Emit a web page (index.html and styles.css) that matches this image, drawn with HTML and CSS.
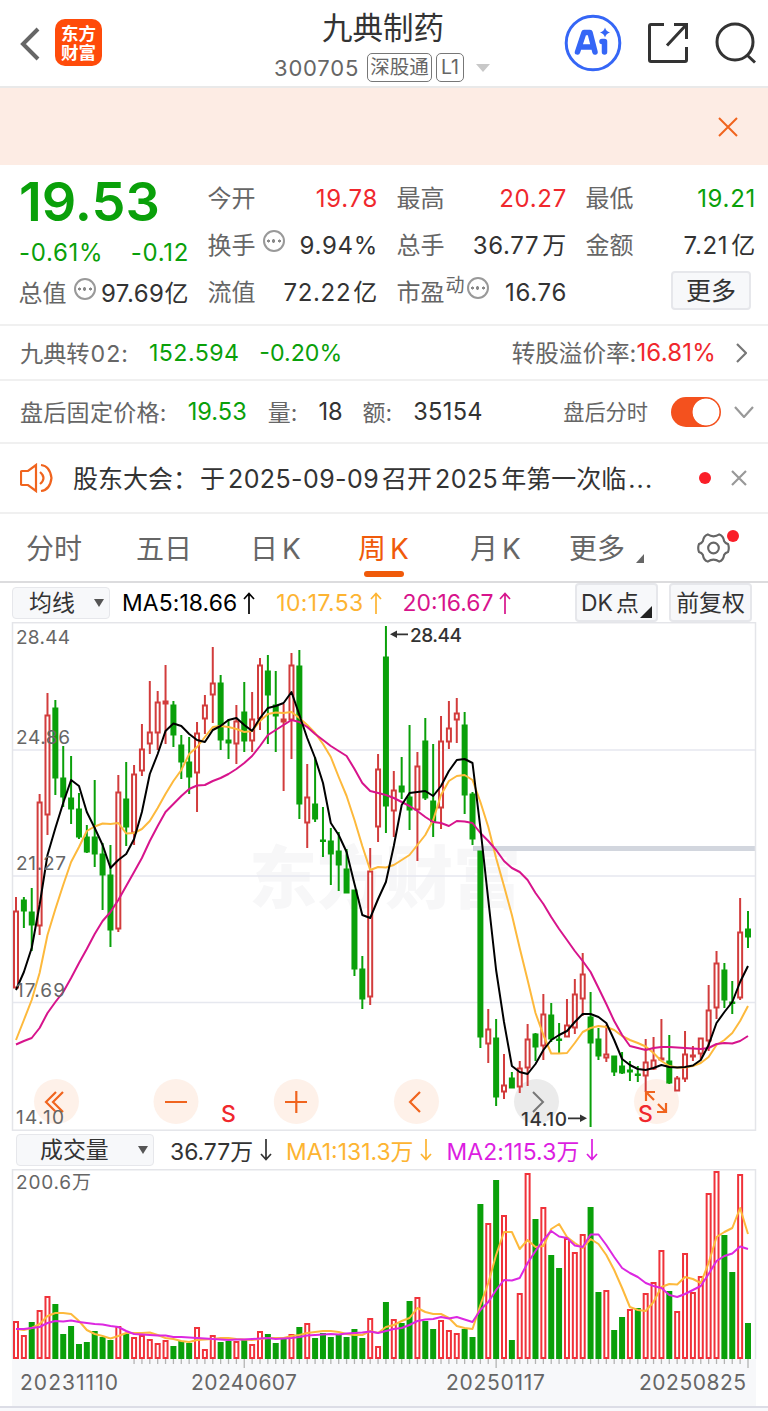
FILE: index.html
```html
<!DOCTYPE html>
<html lang="zh-CN">
<head>
  <meta charset="UTF-8" />
  <meta name="viewport" content="width=device-width, initial-scale=1.0"/>
  <title>九典制药 300705</title>
  <link rel="stylesheet" href="styles.css">
</head>

<body>
  <div class="header">
    <div class="header-left">
      <svg class="back" width="22" height="36" viewBox="0 0 22 36"><path d="M19 3 L4 18 L19 33"/></svg>
      <div class="logo"><span>东方</span><span>财富</span></div>
    </div>
    <div class="header-title">
      <h1>九典制药</h1>
      <div class="code">
        <span class="num">300705</span>
        <span class="tag">深股通</span>
        <span class="tag tag-l1">L1</span>
        <i class="caret"></i>
      </div>
    </div>
    <div class="header-right">
      <svg width="58" height="58" viewBox="0 0 58 58">
        <circle cx="29" cy="29" r="26.8" fill="none" stroke="#3566f6" stroke-width="3"/>
        <path d="M13.500 38 L20 18.500 H26 L31 38 M17 33 H29" fill="none" stroke="#3566f6" stroke-width="5.500" stroke-linejoin="round" stroke-linecap="round"/>
        <path d="M38 27.500 H40.500 V38" fill="none" stroke="#3566f6" stroke-width="5.500" stroke-linejoin="round" stroke-linecap="round"/>
        <path d="M41 13.500 Q42 17.500 46 18.500 Q42 19.500 41 23.500 Q40 19.500 36 18.500 Q40 17.500 41 13.500Z" fill="#3566f6"/>
      </svg>
      <svg class="share" width="42" height="42" viewBox="0 0 42 42"><path d="M17 2.500 H4 Q2.500 2.500 2.500 4 V38 Q2.500 39.500 4 39.500 H38 Q39.500 39.500 39.500 38 V25 M27 2.500 H39.500 V17 M39.500 2.500 L20 23.500"/></svg>
      <svg class="search" width="42" height="42" viewBox="0 0 42 42"><circle cx="20" cy="20" r="18"/><path d="M32 33 L40 40.500"/></svg>
    </div>
  </div>

  <div class="banner">
    <svg width="20" height="20" viewBox="0 0 20 20"><path d="M1 1 L19 19 M19 1 L1 19"/></svg>
  </div>

  <div class="quote">
    <div class="col">
      <div class="price">19.53</div>
      <div class="cell change green"><span>-0.61%</span><span>-0.12</span></div>
      <div class="cell"><label>总值</label><i class="more-dot"></i><span class="tight">97.69亿</span></div>
    </div>
    <div class="col">
      <div class="cell"><label>今开</label><span class="red">19.78</span></div>
      <div class="cell"><label>换手</label><i class="more-dot"></i><span>9.94%</span></div>
      <div class="cell"><label>流值</label><span>72.22<b class="unit">亿</b></span></div>
    </div>
    <div class="col">
      <div class="cell"><label>最高</label><span class="red">20.27</span></div>
      <div class="cell"><label>总手</label><span>36.77<b class="unit wide">万</b></span></div>
      <div class="cell"><label>市盈</label><sup>动</sup><i class="more-dot near"></i><span>16.76</span></div>
    </div>
    <div class="col">
      <div class="cell"><label>最低</label><span class="green">19.21</span></div>
      <div class="cell"><label>金额</label><span>7.21<b class="unit wide">亿</b></span></div>
      <div class="cell"><button class="more-btn">更多</button></div>
    </div>
  </div>

  <div class="row bond">
    <label>九典转<em>02:</em></label>
    <span class="green v1">152.594</span>
    <span class="green v2">-0.20%</span>
    <div class="right">
      <label>转股溢价率:</label><span class="red rate">16.81%</span>
      <svg class="arrow" width="12" height="20" viewBox="0 0 12 20"><path d="M2 1 L11 10 L2 19"/></svg>
    </div>
  </div>

  <div class="row after">
    <label class="a0">盘后固定价格:</label>
    <span class="green a1">19.53</span>
    <label class="a2">量:</label>
    <span class="a3">18</span>
    <label class="a4">额:</label>
    <span class="a5">35154</span>
    <div class="right">
      <label>盘后分时</label>
      <i class="switch"></i>
      <svg class="arrow grey" width="20" height="12" viewBox="0 0 20 12"><path d="M1 1 L10 11 L19 1"/></svg>
    </div>
  </div>

  <div class="row notice">
    <svg width="34" height="30" viewBox="0 0 34 30"><path d="M2 8 H8 L16 2 V28 L8 22 H2 Q1 22 1 21 V9 Q1 8 2 8 M20 9 Q27 15 20 21 M21 2 Q30 3 31.500 15 Q30 27 21 28"/></svg>
    <p>股东大会：<span>于<em>2025-09-09</em>召开<em>2025</em>年第一次临<b>...</b></span></p>
    <i class="dot"></i>
    <svg class="close" width="16" height="16" viewBox="0 0 16 16"><path d="M1 1 L15 15 M15 1 L1 15"/></svg>
  </div>

  <div class="tabs">
    <a>分时</a>
    <a class="t2">五日</a>
    <a class="t3">日<em>K</em></a>
    <a class="t4 active">周<em>K</em></a>
    <a class="t5">月<em>K</em></a>
    <a class="tab-more">更多<i></i></a>
    <div class="gear">
      <svg width="33" height="32" viewBox="0 0 34 32"><path d="M11 2 Q17 6 23 2 Q27 3 28 9 Q29 11 32 12 Q33.500 16 32 20 Q29 21 28 23 Q27 29 23 30 Q17 26 11 30 Q7 29 6 23 Q5 21 2 20 Q.5 16 2 12 Q5 11 6 9 Q7 3 11 2Z"/><circle cx="17" cy="16" r="5.500"/></svg>
      <i class="dot"></i>
    </div>
  </div>

  <div class="toolbar">
    <button class="select">均线<i></i></button>
    <span class="m5">MA5:18.66</span>
    <svg class="trend m5" width="12" height="22" viewBox="0 0 12 22"><path d="M6 22V1.500M1 7L6 1.500L11 7"/></svg>
    <span class="m10 spaced">10:17.53</span>
    <svg class="trend m10" width="12" height="22" viewBox="0 0 12 22"><path d="M6 22V1.500M1 7L6 1.500L11 7"/></svg>
    <span class="m20">20:16.67</span>
    <svg class="trend m20" width="12" height="22" viewBox="0 0 12 22"><path d="M6 22V1.500M1 7L6 1.500L11 7"/></svg>
    <button class="dk">DK<em>点</em><i></i></button>
    <button class="fq">前复权</button>
  </div>

  <svg class="chart" id="kline" width="768" height="509" viewBox="0 622 768 509"></svg>

  <div class="toolbar vol-bar">
    <button class="select wide">成交量<i></i></button>
    <span class="vol">36.77万</span>
    <svg class="trend" width="12" height="22" viewBox="0 0 12 22"><path d="M6 0V20.500M1 15L6 20.500L11 15"/></svg>
    <span class="m10">MA1:131.3万</span>
    <svg class="trend m10" width="12" height="22" viewBox="0 0 12 22"><path d="M6 0V20.500M1 15L6 20.500L11 15"/></svg>
    <span class="mv">MA2:115.3万</span>
    <svg class="trend mv" width="12" height="22" viewBox="0 0 12 22"><path d="M6 0V20.500M1 15L6 20.500L11 15"/></svg>
  </div>

  <svg class="chart" id="volume" width="768" height="190" viewBox="0 1169 768 190"></svg>
  <svg class="chart axis" id="axis" width="768" height="47" viewBox="0 1359 768 47"></svg>
  <div class="bottom"></div>

  <script src="script.js"></script>
</body>
</html>
```

FILE: styles.css
```css
html, body {
  margin: 0;
  height: 100%;
}

body {
  width: 768px;
  overflow: hidden;
  background-color: #fff;
  color: #333;
  font-family: Inter, "Noto Sans CJK SC", sans-serif;
  font-size: 24px;
}

* {
  box-sizing: border-box;
}

svg {
  display: block;
  flex: none;
}

i, em, b {
  font-style: normal;
  font-weight: normal;
}

label {
  color: #666;
}

button {
  font: inherit;
  color: #333;
  padding: 0;
  background-color: #f7f8fa;
  border: 2px solid #e6e7eb;
  border-radius: 4px;
  white-space: nowrap;
}

.green { color: #0aa00a; }
.red { color: #f0282d; }

/* header */
.header {
  height: 88px;
  display: flex;
  justify-content: space-between;
  border-bottom: 2px solid #e9e9e9;
}

.header-left {
  width: 260px;
  padding: 19px 0 0 19px;
  display: flex;
}

.back {
  margin-top: 7px;
  fill: none;
  stroke: #666;
  stroke-width: 4;
}

.logo {
  width: 47px;
  height: 47px;
  margin-left: 14px;
  border-radius: 10px;
  background-color: #ff4b0a;
  color: #fff;
  display: flex;
  flex-direction: column;
  align-items: center;
  justify-content: center;
  font-size: 17.5px;
  font-weight: bold;
  line-height: 19px;
}

.header-title {
  width: 250px;
  display: flex;
  flex-direction: column;
  align-items: center;
}

.header-title h1 {
  margin: 7px 0 0 -4px;
  font-size: 30.5px;
  font-weight: normal;
  line-height: 41px;
}

.code {
  display: flex;
  align-items: center;
  width: 222px;
  height: 41px;
  margin-top: 1px;
  color: #666;
}

.num {
  flex: none;
  font-size: 22px;
  width: 86px;
  letter-spacing: .8px;
}

.tag {
  flex: none;
  height: 29px;
  width: 65px;
  margin-left: 7px;
  border: 1.5px solid #777;
  border-radius: 5px;
  font-size: 19.5px;
  line-height: 26px;
  text-align: center;
  white-space: nowrap;
}

.tag-l1 {
  width: 28px;
  margin-left: 4px;
}

.caret {
  margin-left: 12px;
  border: 7px solid transparent;
  border-top: 8px solid #c8c8c8;
  border-bottom: 0;
}

.header-right {
  width: 258px;
  display: flex;
  padding: 14px 11px 0 0;
  justify-content: flex-end;
  gap: 25px;
}

.share, .search {
  margin-top: 8px;
  fill: none;
  stroke: #333;
  stroke-width: 3;
}

.header-right .share {
  margin-right: 1px;
}

.banner {
  height: 77px;
  background-color: #fdece4;
  display: flex;
  align-items: center;
  justify-content: flex-end;
  padding-right: 30px;
}

.banner svg {
  stroke: #f0641e;
  stroke-width: 2;
}

/* quote block */
.quote {
  height: 161px;
  border-bottom: 2px solid #f0f0f0;
  padding: 10px 13px 0 19px;
  display: grid;
  grid-template-columns: repeat(4, 169px);
  gap: 20px;
}

.cell {
  height: 47px;
  display: flex;
  align-items: center;
  line-height: 48px;
  white-space: nowrap;
}

.cell label {
  margin-left: -.5px;
}

.cell > span {
  letter-spacing: .7px;
}

.cell > span:last-child,
.cell > button {
  margin-left: auto;
  margin-right: -1px;
}

.price {
  height: 54px;
  line-height: 54px;
  font-size: 54px;
  font-weight: 600;
  color: #0aa00a;
}

.change {
  height: 46px;
  padding-top: 1px;
}

.col:first-child .cell:last-child {
  height: 37px;
  line-height: 37px;
}

.cell > .tight {
  letter-spacing: .5px;
}

.unit {
  margin-left: 2px;
}

.unit.wide {
  margin-left: 3px;
}

.more-dot {
  flex: none;
  width: 22px;
  height: 22px;
  margin: -10px 0 0 7px;
  border: 2px solid #999;
  border-radius: 50%;
  background: radial-gradient(circle, #888 1.5px, transparent 2px) center / 5px 20px no-repeat,
    radial-gradient(circle, #888 1.3px, transparent 1.8px) 1px center / 5px 20px no-repeat,
    radial-gradient(circle, #888 1.3px, transparent 1.8px) 12px center / 5px 20px no-repeat;
}

.more-dot.near {
  margin-left: 2px;
}

.cell sup {
  font-size: 19px;
  line-height: 20px;
  margin: -13px 0 0 1px;
  color: #666;
}

.cell > .more-btn {
  width: 80px;
  height: 39px;
  margin: -4px 4px 0 auto;
  font-size: 25px;
  line-height: 34px;
}

/* info rows */
.row {
  display: flex;
  align-items: center;
  padding: 0 13px 0 20px;
  border-bottom: 2px solid #f0f0f0;
  white-space: nowrap;
}

.row label {
  margin-top: -2px;
}

.right {
  margin-left: auto;
  display: flex;
  align-items: center;
}

.bond {
  height: 55px;
  font-size: 23.2px;
}

.bond em {
  letter-spacing: 1px;
  margin-left: 1px;
}

.bond .v1 {
  margin-left: 20px;
  letter-spacing: .4px;
}

.bond .v2 { margin-left: 20px; }

.bond .right label { font-size: 23.6px; }

.rate {
  font-size: 24px;
  letter-spacing: .2px;
}

.arrow {
  margin: 0 8px 0 19px;
  fill: none;
  stroke: #777;
  stroke-width: 2.2;
}

.after {
  height: 63px;
  font-size: 23.6px;
}

.after label { font-size: 23px; }
.after .a0 { letter-spacing: .3px; }
.after .a1 { margin-left: 21px; }
.after .a2 { margin-left: 21px; }
.after .a3 { margin-left: 21px; }
.after .a4 { margin-left: 20px; }
.after .a5 { margin-left: 21px; letter-spacing: .3px; }
.after .right label { font-size: 21.2px; }

.switch {
  width: 50px;
  height: 30px;
  margin-left: 23px;
  border-radius: 15px;
  background: radial-gradient(circle at 35px 15px, #fff 13px, transparent 13.8px) #f4511e;
}

.arrow.grey {
  margin: 0 1px 0 13px;
  stroke: #999;
}

.notice {
  height: 70px;
  font-size: 25px;
}

.notice svg {
  fill: none;
  stroke: #f0641e;
  stroke-width: 2.2;
}

.notice p {
  margin: -3px 0 0 19px;
  width: 606px;
}

.notice p span {
  margin-left: 2px;
}

.notice p b {
  margin-left: 2px;
  letter-spacing: 1.2px;
}

.notice em {
  letter-spacing: .4px;
  margin: 0 3px;
}

.dot {
  width: 12px;
  height: 12px;
  border-radius: 50%;
  background-color: #fa1e28;
}

.notice .dot {
  margin-left: 20px;
}

.notice .close {
  margin-left: 20px;
  stroke: #999;
}

/* tabs */
.tabs {
  height: 69px;
  border-bottom: 2px solid #dcdcde;
  display: flex;
  align-items: center;
  padding-left: 26px;
  color: #666;
  font-size: 28px;
}

.tabs a {
  flex: none;
  width: 110px;
  height: 67px;
  line-height: 70px;
  white-space: nowrap;
  position: relative;
}

.tabs .t2 { width: 114px; }
.tabs .t3 { width: 108px; }
.tabs .t4 { width: 112px; }
.tabs .t5 { width: 99px; }
.tabs .tab-more { width: 128px; }

.tabs em {
  margin-left: 4px;
}

.tabs .active {
  color: #f05a0a;
}

.tabs .active::after {
  content: "";
  position: absolute;
  left: 6px;
  bottom: 4px;
  width: 40px;
  height: 6px;
  border-radius: 3px;
  background-color: #f05a0a;
}

.tab-more i {
  position: absolute;
  left: 67px;
  top: 40px;
  border-left: 8px solid transparent;
  border-bottom: 9px solid #666;
}

.gear {
  position: relative;
}

.gear svg {
  fill: none;
  stroke: #666;
  stroke-width: 2.2;
}

.gear .dot {
  position: absolute;
  right: -9px;
  top: -2px;
}

/* chart toolbars */
.toolbar {
  height: 39px;
  display: flex;
  align-items: center;
  padding-left: 12px;
  font-size: 22.9px;
  white-space: nowrap;
}

.select {
  width: 98px;
  height: 32px;
  margin-right: 12px;
  padding-left: 16px;
  line-height: 30px;
  display: flex;
  align-items: center;
  border-width: 1.5px;
}

.select i {
  margin: 0 5px 0 auto;
  border: 5px solid transparent;
  border-top: 8px solid #555;
  border-bottom: 0;
}

.trend {
  margin: 0 21px 0 6px;
  fill: none;
  stroke: currentColor;
  stroke-width: 1.7;
}

.m5 { color: #000; letter-spacing: .1px; }
.m10 { color: #fdb432; }
.m20 { color: #d7148c; }
.mv { color: #dc1ee1; }

.spaced {
  letter-spacing: .4px;
}

.dk, .fq {
  height: 39px;
  line-height: 36px;
}

.dk {
  width: 83px;
  margin-left: auto;
  text-align: left;
  padding-left: 4px;
  position: relative;
}

.dk em {
  margin-left: 3px;
}

.dk i {
  position: absolute;
  right: 4px;
  bottom: 2px;
  border-left: 12px solid transparent;
  border-bottom: 12px solid #222;
}

.fq {
  width: 83px;
  margin: 0 16px 0 11px;
}

.vol-bar {
  height: 38px;
  padding-left: 16px;
}

.vol-bar span {
  margin-top: -1px;
}

.vol-bar .trend {
  margin: 0 14px 0 7px;
}

.select.wide {
  width: 138px;
  padding-left: 23px;
  margin-right: 16px;
}

.vol-bar .mv {
  letter-spacing: .1px;
}

/* charts */
.chart text {
  font-size: 19px;
  fill: #666;
}

.chart .mark {
  fill: #333;
  font-weight: 500;
}

.chart .signal {
  font-size: 23px;
  font-weight: 500;
  fill: #f0282d;
}

.chart .watermark {
  font-family: "Noto Sans CJK SC", sans-serif;
  font-size: 68px;
  font-weight: 900;
  fill: #f7f7f8;
}

.frame { fill: none; stroke: #e4e5e9; stroke-width: 1.5; }
.grid { stroke: #e6e8ef; stroke-width: 1.5; }
.level { stroke: #d2d6de; stroke-width: 5; }
.candle-up { fill: #fff; stroke: #d23c3c; stroke-width: 2; }
.candle-down { fill: #0aa00a; stroke: #0aa00a; stroke-width: 2; }
.bar-up { fill: #fff; stroke: #f0323a; stroke-width: 2; }
.bar-down { fill: #0aa00a; stroke: #0aa00a; stroke-width: 2; }
.line { fill: none; stroke-width: 2; stroke-linejoin: round; }
.line-ma5 { stroke: #000; }
.line-ma10 { stroke: #fdb93c; }
.line-ma20 { stroke: #d7148c; }
.line-mv { stroke: #dc28e1; }
.ctl { fill: #fef1e9; }
.ctl-off { fill: #ebebeb; }
.ctl-icon { fill: none; stroke: #f0641e; stroke-width: 2.2; }
.ctl-icon-off { fill: none; stroke: #777; stroke-width: 2; }
.arrow-line { fill: none; stroke: #333; stroke-width: 1.8; }
.arrow-head { fill: #333; }
.tick { stroke: #b4b4b4; stroke-width: 1.3; }
.axis-bg { fill: #f7f8fa; }

.chart.axis text {
  font-size: 21px;
}

.bottom {
  height: 5px;
  border-top: 2px solid #dcdde6;
  background-color: #f8f9fc;
}
```

FILE: script.js
```js
const STEP = 732 / 93;
const X0 = 16;

// type, body top, body bottom, high, low
const candles = [
  ["u",911,988,897,988],["d",900,911,897,928],["d",912,925,888,951],["u",802,926,794,935],
  ["u",715,815,693,835],["d",708,778,700,795],["d",778,797,746,807],["d",798,809,756,824],
  ["d",809,837,793,839],["d",837,852,825,853],["d",837,854,780,867],["d",854,875,843,910],
  ["d",875,930,845,947],["u",792,929,775,932],["d",799,827,762,846],["u",774,833,765,845],
  ["u",749,771,724,776],["u",732,744,681,754],["u",702,733,691,750],["u",701,704,665,744],
  ["d",705,735,701,747],["d",745,762,735,779],["d",762,777,737,794],["u",733,773,722,812],
  ["u",705,719,695,734],["u",683,695,647,723],["d",683,740,675,750],["d",740,743,719,759],
  ["u",721,744,705,764],["d",712,741,682,752],["u",719,741,692,752],["u",665,719,658,730],
  ["d",671,695,655,744],["d",705,716,671,752],["u",719,722,704,791],["u",665,720,653,759],
  ["d",666,804,650,819],["u",797,823,764,848],["d",804,819,757,822],["d",840,841,807,857],
  ["d",841,854,828,885],["d",851,865,832,891],["d",869,893,849,893],["d",890,969,890,976],
  ["d",969,999,956,1009],["u",871,997,848,1005],["u",769,827,754,842],["d",657,806,626,833],
  ["u",790,811,771,837],["d",786,792,757,799],["d",797,810,725,830],["u",766,810,752,861],
  ["d",741,798,718,800],["d",801,822,744,837],["u",741,808,716,829],["u",728,742,701,749],
  ["u",713,720,698,743],["d",725,795,712,814],["d",794,839,792,845],["d",851,1037,851,1048],
  ["u",1029,1044,1009,1063],["d",1038,1097,1019,1106],["u",1085,1092,1054,1099],["d",1078,1088,1072,1088],
  ["u",1068,1087,1061,1093],["u",1039,1068,1024,1086],["d",1034,1047,1033,1061],["u",1014,1046,994,1060],
  ["d",1015,1039,1003,1042],["d",1039,1040,1023,1053],["u",1025,1037,999,1037],["u",994,1028,979,1034],
  ["u",974,999,953,1016],["d",1017,1043,992,1127],["d",1039,1056,1028,1060],["u",1054,1058,1025,1062],
  ["d",1056,1072,1056,1076],["d",1066,1073,1052,1074],["d",1070,1072,1061,1081],["d",1074,1075,1066,1082],
  ["u",1062,1076,1039,1092],["u",1060,1069,1037,1070],["u",1058,1060,1019,1060],["d",1061,1083,1035,1084],
  ["u",1078,1091,1076,1091],["u",1054,1079,1031,1082],["u",1055,1057,1046,1061],["u",1038,1054,1038,1060],
  ["u",1010,1041,985,1051],["u",963,1008,951,1019],["d",970,1000,963,1008],["d",1002,1003,981,1014],
  ["u",932,998,898,1000],["d",929,937,911,948]
];

const ma5 = [
  990,972,948,905,855,828,803,780,786,812,828,845,868,860,854,839,812,774,754,731,
  723.5,726,734,740,742,730,726,720,718,725,731,718,708,706,703,692,715,738,758,783,
  823,835,852,884,915,918,899,882,846,805,793,792,791,796,786,771,760,759,763,828,
  900,970,1022,1066,1072,1074,1064,1050,1040,1035,1031,1022,1014,1014,1017,1023,1040,1059,1065,1069,
  1070,1068,1065,1067,1067.5,1067,1065.5,1060,1045,1023,1012,1002,982,966
];

const ma10 = [
  1040,1020,1000,973,935,909,885,862,847,831,826.5,823.5,824,823,833.5,833,829,821,808,794,
  781,770,754,747,737,727,726,727,729,732,731,721,714,712.5,713,712,718,725,733,744,
  757,777,796,820,846,870,867,867.5,865,860,855,845,835,820,795,781,776,775,780,802,
  827,858,886,915,948,980,1013,1035,1053.5,1053.5,1053,1043,1032,1028,1026,1027,1030,1036,1040,1043,
  1046.5,1053,1061,1066,1067.5,1067.5,1066,1063,1057,1045,1040,1033,1021,1006
];

const ma20 = [
  1044.5,1041,1038,1028,1013,1002,992,978,963,949,934,921,912,900,886,872,858,841,826,812,
  804,796,789,785.5,785,781,778,774,769,763,756,746,735,730,725,720,722,727,734,740,
  746,751,756,769,783,791,793,795,798,802,806,811,817,822,823,826,821,821.5,823,833,
  841,850,861,868,872,880,893,904,917,929,940,951,961,972,988,1004,1021,1035,1046,1048,
  1050,1048,1047,1047,1047.5,1048,1048.5,1049,1048,1044,1043,1043.5,1041,1036
];

const volumes = (
  "u1321 u1335 d1322 u1310 u1296 d1304 d1334 d1326 d1344 d1342 d1331 d1337 d1340 u1326 d1333 u1337 u1335 u1339 u1343 u1340 " +
  "d1346 d1341 d1343 u1327 u1349 u1335 d1342 d1341 u1341 d1340 u1344 u1331 d1334 d1343 d1339 u1334 d1327 u1323 d1338 d1333 " +
  "d1337 d1334 d1337 d1329 d1338 u1318 u1346 d1302 u1319 d1323 d1301 u1297 d1321 d1329 u1320 u1330 u1333 d1329 d1337 d1204 " +
  "u1223 d1180 u1215 d1340 u1293 u1173 d1219 u1207 d1255 d1268 u1238 u1252 u1234 d1207 d1292 u1290 d1330 d1317 u1309 d1308 " +
  "u1293 u1282 u1250 d1291 u1311 u1253 u1292 u1276 u1193 u1171 d1235 d1272 u1174 d1323"
).split(" ");

const mv1 = [
  1329,1330,1328,1324,1316,1313,1313,1314,1321,1330,1334,1336,1338.5,1336,1333,1333,1333,1332.5,1335,1338,
  1339,1341,1342,1340,1339.5,1339,1338,1338,1339,1339.5,1340,1339,1338,1338,1338,1336,1335,1333,1332,1331,
  1331,1332,1334,1335,1335,1331,1333,1327,1325,1321,1318,1308,1312,1314,1314,1318,1326,1328,1329,1305,
  1283,1255,1232,1232,1249,1240,1247,1246,1229,1224,1237,1243,1248,1239,1244,1255,1270,1288,1307,1310,
  1311,1302,1287,1284,1284.5,1277,1279,1283,1263,1237,1232,1228,1208,1234
];

const mv2 = [
  1329,1329,1328,1327,1323,1321,1321.5,1320.5,1322,1323,1324,1324.5,1326,1327,1331,1334,1334.5,1335,1335.5,1335.5,
  1337,1337,1337.5,1338,1338.5,1339,1339.5,1340,1339.5,1339.5,1339,1338.5,1338,1339,1338.5,1338,1337,1335.5,1335,1334.5,
  1334,1334.5,1333.5,1333,1332.5,1331.5,1333,1331,1329,1328,1325,1321,1319.5,1319,1317,1318.5,1317,1319.5,1322,1310,
  1302,1290,1280,1280.5,1278,1263,1251,1240,1231,1236.5,1238,1245.5,1247,1234.5,1234.5,1245,1257,1268,1273,1277,
  1283,1286,1288,1295,1297,1294,1290,1286,1274,1261,1256,1253.5,1246.5,1249
];

const xAt = i => X0 + i * STEP;

function line(values, cls) {
  const pts = values.map((y, i) => `${xAt(i).toFixed(1)},${y}`).join(" ");
  return `<polyline class="line ${cls}" points="${pts}"/>`;
}

function candle([type, top, bottom, high, low], i) {
  const x = xAt(i);
  const cls = type === "u" ? "candle-up" : "candle-down";
  const h = Math.max(bottom - top - 1, 0.5);
  return `<path class="${cls}" d="M${x} ${high}V${low}"/>` +
    `<rect class="${cls}" x="${x - 2}" y="${top + 0.5}" width="4" height="${h}"/>`;
}

function bar(item, i) {
  const y = Number(item.slice(1)) + 1;
  const cls = item[0] === "u" ? "bar-up" : "bar-down";
  return `<rect class="${cls}" x="${xAt(i) - 2}" y="${y}" width="4" height="${1358 - y}"/>`;
}

function circle(x, cls) {
  return `<circle class="${cls}" cx="${x}" cy="1101.5" r="22.5"/>`;
}

document.getElementById("kline").innerHTML =
  `<text class="watermark" x="249" y="903">东方财富</text>
  <path class="grid" d="M12 750H756M12 876H756M12 1002.500H756"/>
  <path class="level" d="M473 848.500H756"/>
  <rect class="frame" x="12.500" y="622.700" width="743" height="507.500"/>` +
  [56.5, 176, 296.3, 416.5, 656.5].map(x => circle(x, "ctl")).join("") +
  circle(536.5, "ctl-off") +
  candles.map(candle).join("") +
  line(ma10, "line-ma10") + line(ma20, "line-ma20") + line(ma5, "line-ma5") +
  `<path class="ctl-icon" d="M56 1092L46 1102L56 1112M63 1092L53 1102L63 1112M165 1102H187M285 1102H307M296.300 1091V1113M420 1092L410 1102L420 1112"/>
  <path class="ctl-icon" d="M655 1092H646V1101M646 1092L654 1100M666 1103V1112H657M658 1104L666 1112"/>
  <path class="ctl-icon-off" d="M533 1092L543 1102L533 1112"/>
  <text x="16" y="643.500" textLength="54">28.44</text>
  <text x="16" y="743.500" textLength="54">24.86</text>
  <text x="16" y="869.500" textLength="50">21.27</text>
  <text x="16" y="996.500" textLength="49">17.69</text>
  <text x="16" y="1123.500" textLength="48">14.10</text>
  <text class="mark" x="410" y="641.500" textLength="52">28.44</text>
  <path class="arrow-line" d="M393 634.300H408M568 1118.300H582"/>
  <path class="arrow-head" d="M390 634.300L397 630.500V638ZM587 1118.300L580 1114.500V1122Z"/>
  <text class="mark" x="521" y="1126" textLength="46">14.10</text>
  <text class="signal" x="221" y="1122">S</text>
  <text class="signal" x="638" y="1122">S</text>`;

document.getElementById("volume").innerHTML =
  `<path class="frame" d="M12.500 1359V1169.700H755.500V1359"/>` +
  volumes.map(bar).join("") +
  line(mv1, "line-ma10") + line(mv2, "line-mv") +
  `<text x="16" y="1189" textLength="75">200.6万</text>`;

let ticks = "";
for (let i = 15; i < 94; i++) {
  const major = (i - 29) % 32 === 0;
  ticks += `<path class="tick" d="M${xAt(i)} 1359V${major ? 1368 : 1364}"/>`;
}

document.getElementById("axis").innerHTML =
  `<rect class="axis-bg" x="12" y="1359" width="744" height="47"/>` + ticks +
  `<text x="20" y="1389.500" textLength="98">20231110</text>
  <text x="191" y="1389.500" textLength="106">20240607</text>
  <text x="446" y="1389.500" textLength="99">20250117</text>
  <text x="639" y="1389.500" textLength="107">20250825</text>`;
```
